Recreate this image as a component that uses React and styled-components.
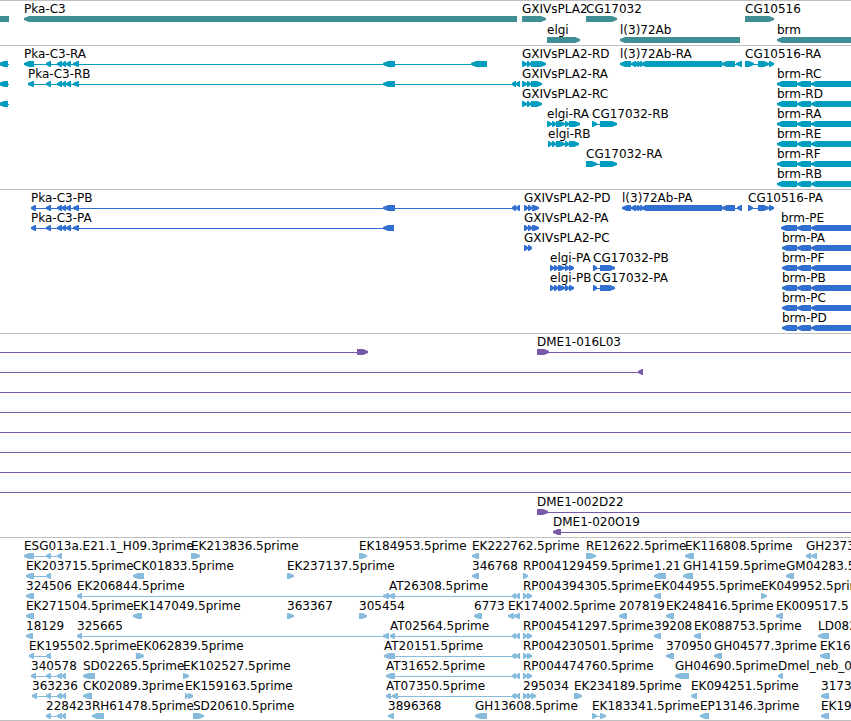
import React from "react";
import styled, { createGlobalStyle } from "styled-components";

const GlobalStyle = createGlobalStyle`
  body {
    margin: 0;
    background: #ffffff;
    color: #000000;
    font-family: "DejaVu Sans", "Lucida Sans", sans-serif;
    font-size: 12px;
    line-height: 14px;
  }
`;

const Viewer = styled.main`
  overflow: hidden;
  border-bottom: 1px solid #bfbfbf;
`;

const Track = styled.section`
  display: flex;
  flex-direction: column;
  padding: ${(p) => (p.$roomy ? "0 0 2px" : "1px 0 2px")};
  border-top: 1px solid #bfbfbf;
  color: ${(p) => p.$color};

  &:last-child {
    padding-bottom: 1px;
  }
`;

const Row = styled.div`
  display: grid;
  grid-template-rows: 14px 6px;
  padding-top: ${(p) => (p.$roomy ? "1px" : "0")};
`;

const Names = styled.div`
  position: relative;
`;

/* Each name sits at the map coordinate where its feature starts. */
const Name = styled.span`
  position: absolute;
  left: ${(p) => p.$x}px;
  color: #000000;
  white-space: nowrap;
`;

const Glyphs = styled.svg`
  display: block;
  width: 100%;
  height: 6px;
  fill: currentColor;
`;

const EDGE = 4000;

// Feature: [name, direction, exons, span]; the span defaults to the exons' extent.
const L = "left";
const R = "right";

const pkaIntrons = [[46, 51], [57, 62], [62, 66], [66, 71], [73, 79]];
const pkaTail = [[512, 516], [516, 520]];
const offLeft = ["", L, [[-1, 8]], [-1, 9]];
const brm = (name, start = 777) => [name, L, [[start, 797], [797, 811], [811, EDGE]]];
const gx = (name, end) => [name, R, [[522, 527], [527, 531], [531, end]]];
const whole = ["", R, [], [0, EDGE]];
const rp = (name) => [name, R, [[523, 527], [527, 532]]];

const tracks = [
  {
    id: "Genes",
    color: "#408f94",
    roomy: true,
    rows: [
      [
        ["", L, [[-10, 9]]],
        ["Pka-C3", L, [[24, 517]]],
        ["GXIVsPLA2", R, [[522, 546]]],
        ["CG17032", R, [[586, 617]]],
        ["CG10516", R, [[745, 774]]],
      ],
      [
        ["elgi", R, [[547, 580]]],
        ["l(3)72Ab", L, [[620, 740]]],
        ["brm", L, [[777, EDGE]]],
      ],
    ],
  },
  {
    id: "Transcripts",
    color: "#009dbf",
    rows: [
      [
        offLeft,
        ["Pka-C3-RA", L, [[24, 34], ...pkaIntrons, [383, 395], [471, 487]]],
        gx("GXIVsPLA2-RD", 546),
        ["l(3)72Ab-RA", L, [[620, 631], [631, 636], [635, 639], [638, 642], [641, 722], [722, 735], [736, 742]]],
        ["CG10516-RA", R, [[745, 754], [758, 769], [769, 774]]],
      ],
      [
        offLeft,
        ["Pka-C3-RB", L, [[28, 34], ...pkaIntrons, [383, 395], ...pkaTail]],
        gx("GXIVsPLA2-RA", 542),
        brm("brm-RC"),
      ],
      [offLeft, gx("GXIVsPLA2-RC", 542), brm("brm-RD")],
      [
        ["elgi-RA", R, [[547, 552], [552, 556], [556, 565], [565, 569], [569, 580]]],
        ["CG17032-RB", R, [[592, 597], [600, 617]]],
        brm("brm-RA"),
      ],
      [["elgi-RB", R, [[548, 552], [552, 556], [556, 565], [565, 569], [569, 579]]], brm("brm-RE")],
      [["CG17032-RA", R, [[586, 597], [600, 617]]], brm("brm-RF")],
      [brm("brm-RB")],
    ],
  },
  {
    id: "Proteins",
    color: "#306fcf",
    rows: [
      [
        ["Pka-C3-PB", L, [[31, 36], ...pkaIntrons, [383, 395], ...pkaTail]],
        ["GXIVsPLA2-PD", R, [[524, 528], [528, 532], [532, 539]]],
        ["l(3)72Ab-PA", L, [[622, 631], [631, 636], [635, 639], [638, 642], [641, 722], [722, 735], [737, 742]]],
        ["CG10516-PA", R, [[748, 753], [758, 769], [769, 774]]],
      ],
      [
        ["Pka-C3-PA", L, [[31, 36], ...pkaIntrons, [383, 394]]],
        ["GXIVsPLA2-PA", R, [[524, 528], [528, 532], [532, 539]]],
        brm("brm-PE", 781),
      ],
      [["GXIVsPLA2-PC", R, [[524, 528], [528, 532]]], brm("brm-PA", 782)],
      [
        ["elgi-PA", R, [[550, 554], [554, 558], [558, 565], [565, 569], [569, 574]]],
        ["CG17032-PB", R, [[593, 597], [600, 615]]],
        brm("brm-PF", 782),
      ],
      [
        ["elgi-PB", R, [[550, 554], [554, 558], [558, 565], [565, 569], [569, 574]]],
        ["CG17032-PA", R, [[593, 597], [600, 615]]],
        brm("brm-PB", 782),
      ],
      [brm("brm-PC", 782)],
      [brm("brm-PD", 782)],
    ],
  },
  {
    id: "BAC clones",
    color: "#7759a8",
    rows: [
      [
        ["", R, [[357, 368]], [0, 368]],
        ["DME1-016L03", R, [[537, 549]], [537, EDGE]],
      ],
      [["", L, [[638, 643]], [0, 643]]],
      [whole],
      [whole],
      [whole],
      [whole],
      [whole],
      [whole],
      [["DME1-002D22", R, [[537, 548]], [537, EDGE]]],
      [["DME1-020O19", L, [[553, 561]], [553, EDGE]]],
    ],
  },
  {
    id: "ESTs",
    color: "#87bbdd",
    rows: [
      [
        ["ESG013a.E21.1_H09.3prime", L, [[24, 34], [46, 51], [57, 62]]],
        ["EK213836.5prime", R, [[191, 200]]],
        ["EK184953.5prime", R, [[359, 367]]],
        ["EK222762.5prime", L, [[472, 479]]],
        ["RE12622.5prime", R, [[586, 596]]],
        ["EK116808.5prime", L, [[685, 694]]],
        ["GH2373", L, [[806, 811], [811, 817]]],
      ],
      [
        ["EK203715.5prime", L, [[26, 34], [46, 51]]],
        ["CK01833.5prime", L, [[133, 144]]],
        ["EK237137.5prime", R, [[287, 294]]],
        ["346768", L, [[472, 479]]],
        ["RP004129459.5prime", R, [[523, 528]]],
        ["1.21", L, [[654, 666]]],
        ["GH14159.5prime", L, [[683, 693]]],
        ["GM04283.5", L, [[786, 794]]],
      ],
      [
        ["324506", L, [[26, 34]]],
        ["EK206844.5prime", L, [[77, 82], [383, 389]]],
        ["AT26308.5prime", L, [[389, 395], ...pkaTail]],
        rp("RP004394305.5prime"),
        ["EK044955.5prime", L, [[654, 661]]],
        ["EK049952.5prime", R, [[761, 767]]],
      ],
      [
        ["EK271504.5prime", L, [[26, 34]]],
        ["EK147049.5prime", L, [[133, 142]]],
        ["363367", R, [[287, 294]]],
        ["305454", R, [[359, 367]]],
        ["6773", L, [[474, 482]]],
        ["EK174002.5prime", L, [[508, 514], [514, 520]]],
        ["207819", L, [[619, 627]]],
        ["EK248416.5prime", L, [[666, 674]]],
        ["EK009517.5", L, [[776, 783]]],
      ],
      [
        ["18129", L, [[26, 33]]],
        ["325665", L, [[77, 82], [383, 389]]],
        ["AT02564.5prime", L, [[390, 395], ...pkaTail]],
        rp("RP004541297.5prime"),
        ["39208", L, [[654, 661]]],
        ["EK088753.5prime", L, [[694, 701]]],
        ["LD082", L, [[818, 829]]],
      ],
      [
        ["EK195502.5prime", L, [[29, 34], [46, 51]]],
        ["EK062839.5prime", R, [[136, 144]]],
        ["AT20151.5prime", L, [[384, 395], ...pkaTail]],
        rp("RP004230501.5prime"),
        ["370950", L, [[666, 674]]],
        ["GH04577.3prime", L, [[714, 722]]],
        ["EK16", L, [[820, 830]]],
      ],
      [
        ["340578", L, [[31, 36], [46, 51], [57, 62], [62, 66]]],
        ["SD02265.5prime", L, [[83, 95]]],
        ["EK102527.5prime", R, [[183, 189]]],
        ["AT31652.5prime", L, [[386, 395], ...pkaTail]],
        rp("RP004474760.5prime"),
        ["GH04690.5prime", L, [[675, 689]]],
        ["Dmel_neb_0", L, [[778, 783]]],
      ],
      [
        ["363236", L, [[32, 37], [46, 51], [57, 62], [62, 66]]],
        ["CK02089.3prime", L, [[83, 92]]],
        ["EK159163.5prime", R, [[185, 188], [188, 193]]],
        ["AT07350.5prime", L, [[386, 391], [392, 398], ...pkaTail]],
        ["295034", R, [[523, 527], [527, 531], [531, 536]]],
        ["EK234189.5prime", R, [[574, 582]]],
        ["EK094251.5prime", L, [[691, 697]]],
        ["3173", L, [[821, 829]]],
      ],
      [
        ["228423", L, [[46, 51], [57, 62], [62, 66]]],
        ["RH61478.5prime", L, [[92, 104]]],
        ["SD20610.5prime", R, [[193, 204]]],
        ["3896368", L, [[388, 394]]],
        ["GH13608.5prime", L, [[475, 487]]],
        ["EK183341.5prime", R, [[592, 597], [600, 606]]],
        ["EP13146.3prime", L, [[700, 709]]],
        ["EK19", L, [[821, 829]]],
      ],
    ],
  },
];

const extent = ([, , exons, span]) => span || [exons[0][0], exons[exons.length - 1][1]];

// An exon is a bar with a blunt arrow head that shrinks with short exons.
function exonPath([a, b], direction) {
  const head = Math.min(5, b - a - 1);
  return direction === L
    ? `M${a} 2L${a + head} 0H${b}V6H${a + head}L${a} 4Z`
    : `M${b} 2L${b - head} 0H${a}V6H${b - head}L${b} 4Z`;
}

function Feature({ feature }) {
  const [, direction, exons] = feature;
  const [from, to] = extent(feature);
  return (
    <g>
      <rect x={from} y="3" width={to - from} height="1" />
      {exons.map((exon) => (
        <path key={exon[0]} d={exonPath(exon, direction)} />
      ))}
    </g>
  );
}

function FeatureRow({ features, roomy }) {
  return (
    <Row $roomy={roomy}>
      <Names>
        {features.map((f, i) => f[0] && (
          <Name key={i} $x={extent(f)[0]}>{f[0]}</Name>
        ))}
      </Names>
      <Glyphs aria-hidden="true">
        {features.map((f, i) => (
          <Feature key={i} feature={f} />
        ))}
      </Glyphs>
    </Row>
  );
}

export default function App() {
  return (
    <>
      <GlobalStyle />
      <Viewer>
        {tracks.map((track) => (
          <Track key={track.id} $color={track.color} $roomy={track.roomy} aria-label={track.id}>
            {track.rows.map((features, i) => (
              <FeatureRow key={i} features={features} roomy={track.roomy} />
            ))}
          </Track>
        ))}
      </Viewer>
    </>
  );
}
